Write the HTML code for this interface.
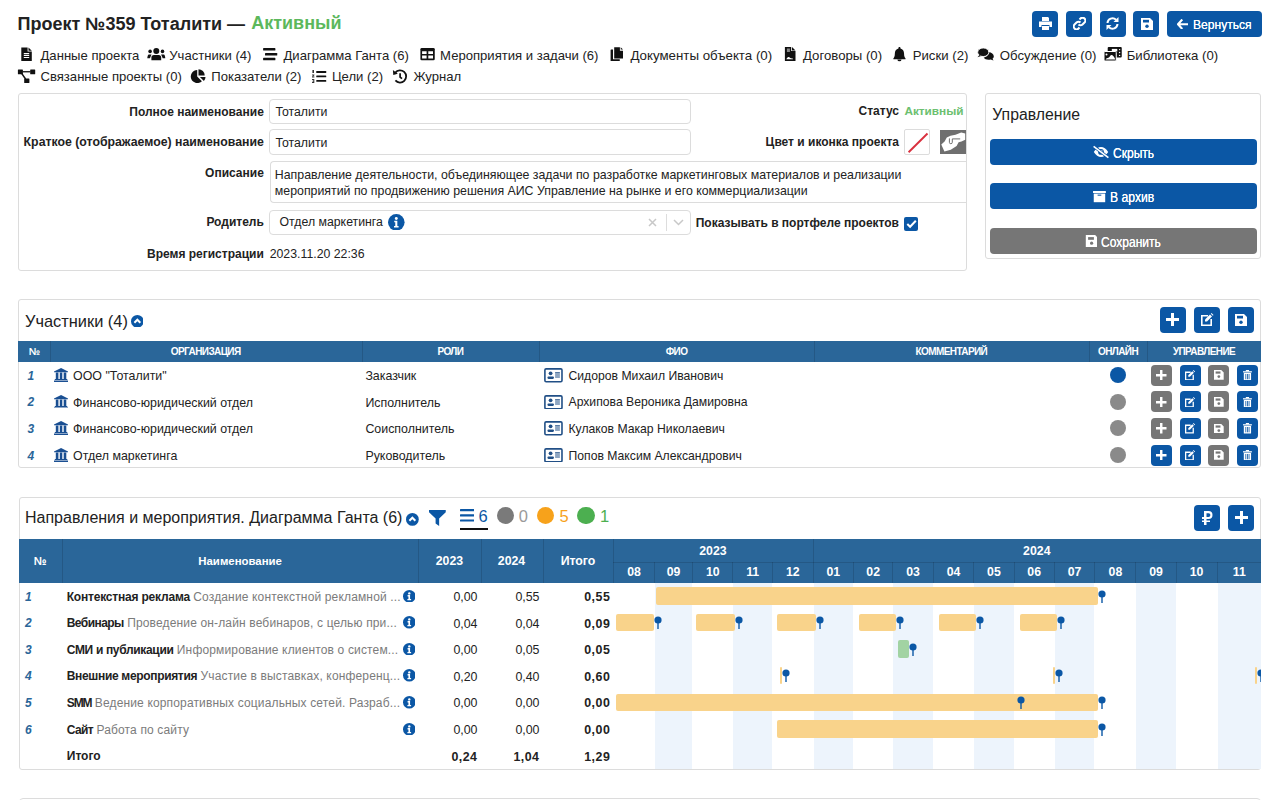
<!DOCTYPE html>
<html><head><meta charset="utf-8"><style>
html,body{margin:0;padding:0;background:#fff;width:1280px;height:800px;overflow:hidden;position:relative;font-family:"Liberation Sans",sans-serif;}
.t{position:absolute;white-space:nowrap;}
.r{position:absolute;display:block;}
</style></head><body>
<div class="t" style="top:12.66px;font-size:18px;line-height:22px;font-weight:bold;color:#222;left:17.60px;">Проект №359 Тоталити —</div>
<div class="t" style="top:12.46px;font-size:18px;line-height:22px;font-weight:bold;color:#5cb85c;left:251.20px;">Активный</div>
<div class="r" style="left:1032.20px;top:10.60px;width:26.00px;height:26.60px;background:#0b57a5;border-radius:4px;"></div>
<div class="r" style="left:1066.10px;top:10.60px;width:26.00px;height:26.60px;background:#0b57a5;border-radius:4px;"></div>
<div class="r" style="left:1099.80px;top:10.60px;width:26.00px;height:26.60px;background:#0b57a5;border-radius:4px;"></div>
<div class="r" style="left:1133.30px;top:10.60px;width:26.00px;height:26.60px;background:#0b57a5;border-radius:4px;"></div>
<div class="r" style="left:1167.30px;top:10.60px;width:94.80px;height:26.60px;background:#0b57a5;border-radius:4px;"></div>
<svg class="r" style="left:1038.50px;top:17.00px;width:13.00px;height:13.00px;color:#fff" viewBox="0 0 13 13" fill="currentColor"><path d="M3 0h6l1 1v3H3z"/><path d="M0 4.5h13V10h-2.5V8h-8v2H0z"/><path d="M3 9h7v4H3z"/></svg>
<svg class="r" style="left:1072.60px;top:17.40px;width:13.00px;height:13.00px;color:#fff" viewBox="0 0 13 13" fill="currentColor"><path d="M5.5 7.5a2.8 2.8 0 0 0 4 0l2-2a2.8 2.8 0 0 0-4-4l-1 1" fill="none" stroke="#fff" stroke-width="2"/><path d="M7.5 5.5a2.8 2.8 0 0 0-4 0l-2 2a2.8 2.8 0 0 0 4 4l1-1" fill="none" stroke="#fff" stroke-width="2"/></svg>
<svg class="r" style="left:1106.30px;top:17.20px;width:13.00px;height:13.00px;color:#fff" viewBox="0 0 13 13" fill="currentColor"><path d="M1.5 6A5 5 0 0 1 10 2.7" fill="none" stroke="#fff" stroke-width="2"/><path d="M12.5 0v5h-5z"/><path d="M11.5 7A5 5 0 0 1 3 10.3" fill="none" stroke="#fff" stroke-width="2"/><path d="M.5 13V8h5z"/></svg>
<svg class="r" style="left:1140.50px;top:17.50px;width:12.00px;height:12.00px;color:#fff" viewBox="0 0 12 12" fill="currentColor"><path d="M0 0h9l3 3v9H0z"/><path fill="#0b57a5" d="M2 1.8h6v2.7H2z"/><circle cx="6" cy="8.2" r="1.7" fill="#0b57a5"/></svg>
<svg class="r" style="left:1177.40px;top:18.50px;width:11.50px;height:10.50px;color:#fff" viewBox="0 0 12 11" fill="currentColor"><path d="M5.5 0.5L1 5.5l4.5 5M1.5 5.5H11.5" fill="none" stroke="#fff" stroke-width="2.2"/></svg>
<div class="t" style="top:17.09px;font-size:13px;line-height:16px;font-weight:normal;color:#fff;left:1193.00px;transform:scaleX(0.93);transform-origin:left center;text-shadow:0 0 0.4px #fff;">Вернуться</div>
<svg class="r" style="left:20.00px;top:46.00px;width:13.00px;height:16.00px;color:#111" viewBox="20 46 13.000 16.000" fill="currentColor"><path d="M21.3 47.4H27.6V51.6H31.8V61.1H21.3Z"/><path d="M28.5 47.4L31.8 50.7H28.5Z"/><path fill="#fff" d="M23.8 53.1h5.4v1.1h-5.4zM23.8 55h5.4v1.1h-5.4zM23.8 56.9h5.4v1.1h-5.4z"/></svg>
<svg class="r" style="left:146.00px;top:47.00px;width:20.00px;height:14.00px;color:#111" viewBox="146 47 20.000 14.000" fill="currentColor"><circle cx="156.3" cy="51.1" r="3"/><path d="M151.4 57.6a2.6 2.6 0 0 1 2.6-2.6h4.6a2.6 2.6 0 0 1 2.6 2.6v2.65h-9.8z"/><circle cx="150.1" cy="51.4" r="1.8"/><circle cx="162.5" cy="51.4" r="1.8"/><path d="M148.9 54.4h2.6l-1.6 3.8h-2.6c.1-1.8.6-3.8 1.6-3.8z"/><path d="M163.7 54.4h-2.6l1.6 3.8h2.6c-.1-1.8-.6-3.8-1.6-3.8z"/></svg>
<svg class="r" style="left:262.00px;top:47.00px;width:16.00px;height:14.00px;color:#111" viewBox="262 47 16.000 14.000" fill="currentColor"><rect x="263.1" y="48.1" width="12.3" height="2.5" rx=".6"/><rect x="265" y="53" width="12.25" height="2.6" rx=".6"/><rect x="263.1" y="57.8" width="12.3" height="2.5" rx=".6"/></svg>
<svg class="r" style="left:419.00px;top:47.00px;width:17.00px;height:14.00px;color:#111" viewBox="419 47 17.000 14.000" fill="currentColor"><rect x="420.4" y="48" width="14.35" height="12.25" rx="1.3"/><path fill="#fff" d="M422.1 51.3h4.5v2.8h-4.5zM428.3 51.3h4.7v2.8h-4.7zM422.1 55.6h4.5v2.9h-4.5zM428.3 55.6h4.7v2.9h-4.7z"/></svg>
<svg class="r" style="left:609.00px;top:46.00px;width:15.00px;height:16.00px;color:#111" viewBox="609 46 15.000 16.000" fill="currentColor"><path d="M614.2 47.2H619.9V50.7H623V58.5H614.2Z"/><path d="M620.7 47.2L623 49.6H620.7Z"/><path d="M610.6 49.9q0-.4.4-.4H613V59.3H619.75V61H610.6Z"/></svg>
<svg class="r" style="left:784.00px;top:46.00px;width:13.00px;height:16.00px;color:#111" viewBox="784 46 13.000 16.000" fill="currentColor"><path d="M784.9 46.9H791.2V51H795.5V61H784.9Z"/><path d="M792 46.9L795.5 50.4H792Z"/><path fill="#fff" d="M786.9 48.7h3v.9h-3zM786.9 50.5h3v.9h-3z"/><path fill="#fff" d="M786.4 58.9q1.2-2.3 2.4-1.9t1.5 1q1 .6 2.6.4v.9h-6.5z"/></svg>
<svg class="r" style="left:892.00px;top:46.00px;width:15.00px;height:16.00px;color:#111" viewBox="892 46 15.000 16.000" fill="currentColor"><path d="M899.45 46.9c.6 0 1 .4 1 1v.5c2.4.6 3.6 2.6 3.6 5 0 3.3.8 4 1.45 4.9v.9h-12.1v-.9c.65-.9 1.45-1.6 1.45-4.9 0-2.4 1.2-4.4 3.6-5v-.5c0-.6.4-1 1-1z"/><path d="M897.4 59.4h4.1a2.05 1.85 0 0 1-4.1 0z"/></svg>
<svg class="r" style="left:976.00px;top:46.00px;width:19.00px;height:16.00px;color:#111" viewBox="976 46 19.000 16.000" fill="currentColor"><path d="M988.6 52.1c2.9.5 5.2 2.1 5.2 4.1 0 1-.5 1.9-1.3 2.6l1 1.6-2.9-1c-.7.2-1.4.3-2.1.3-2.1 0-3.9-.8-4.8-2 3.1-.6 5.1-2.8 4.9-5.6z"/><ellipse cx="983.25" cy="52.25" rx="5.6" ry="4.3" stroke="#fff" stroke-width=".9"/><path d="M979.4 55l-1.9 2.2 3.6-1.1z"/></svg>
<svg class="r" style="left:1103.00px;top:46.00px;width:20.00px;height:16.00px;color:#111" viewBox="1103 46 20.000 16.000" fill="currentColor"><rect x="1107.7" y="47" width="14.05" height="10.5" rx="1"/><path fill="#fff" d="M1111.8 48.9h5.5v2.6h-5.5z"/><circle cx="1119.6" cy="49.6" r=".7" fill="#fff"/><circle cx="1119.6" cy="52.5" r=".7" fill="#fff"/><circle cx="1119.6" cy="55.4" r=".7" fill="#fff"/><rect x="1104" y="51.5" width="12.25" height="9.5" rx="1" stroke="#fff" stroke-width="1"/><circle cx="1106.5" cy="54.4" r="1" fill="#fff"/><path fill="#fff" d="M1105.6 59.6q.4-1.3 2-1.6t2.2-1.6q1-1.6 2-1.4t1.9 1.5q1.2 1.5 1.5 3.1z"/></svg>
<svg class="r" style="left:17.00px;top:68.00px;width:19.00px;height:16.00px;color:#111" viewBox="17 68 19.000 16.000" fill="currentColor"><rect x="17.9" y="69.5" width="5" height="4.7" rx=".5"/><rect x="30.2" y="69.5" width="5" height="4.7" rx=".5"/><rect x="24.2" y="78.4" width="5.2" height="4.7" rx=".5"/><rect x="22.5" y="71.1" width="8" height="1.3"/><path d="M21.6 73.4L25.6 79" stroke="currentColor" stroke-width="1.5"/></svg>
<svg class="r" style="left:190.00px;top:68.00px;width:17.00px;height:16.00px;color:#111" viewBox="190 68 17.000 16.000" fill="currentColor"><path d="M197.2 76.6V69.9A6.6 6.6 0 1 0 201.9 81.3Z"/><path d="M198.5 75.4V69.25A6.2 6.2 0 0 1 204.7 75.4Z"/><path d="M199.9 77H205.5A5.9 5.9 0 0 1 203.9 81.1Z"/></svg>
<svg class="r" style="left:311.00px;top:68.00px;width:17.00px;height:16.00px;color:#111" viewBox="311 68 17.000 16.000" fill="currentColor"><rect x="316.25" y="71.1" width="10" height="1.8" rx=".5"/><rect x="316.25" y="75.5" width="10" height="1.8" rx=".5"/><rect x="316.25" y="80" width="10" height="1.8" rx=".5"/><path opacity=".85" d="M312.4 70h1.6v3h-1.6zM312 74.5h2.4v.8l-1.2 1.3h1.2v.9H312v-.8l1.2-1.3H312zM312 79h2.3v4H312v-.9h1.3v-.6H312.4v-.8h.9v-.6H312z"/></svg>
<svg class="r" style="left:392.00px;top:68.00px;width:16.00px;height:16.00px;color:#111" viewBox="392 68 16.000 16.000" fill="currentColor"><path d="M395.3 72.6A6.1 6.1 0 1 1 395.4 80.4" fill="none" stroke="currentColor" stroke-width="1.8"/><path d="M392.9 70.1L397.8 73.8L393.3 75Z"/><path d="M400.1 73.3V77.1L402 78.7" fill="none" stroke="currentColor" stroke-width="1.7"/></svg>
<div class="t" style="top:47.56px;font-size:13.1px;line-height:16px;font-weight:normal;color:#222;left:40.50px;">Данные проекта</div>
<div class="t" style="top:47.56px;font-size:13.1px;line-height:16px;font-weight:normal;color:#222;left:169.25px;">Участники (4)</div>
<div class="t" style="top:47.56px;font-size:13.1px;line-height:16px;font-weight:normal;color:#222;left:283.50px;">Диаграмма Ганта (6)</div>
<div class="t" style="top:47.56px;font-size:13.1px;line-height:16px;font-weight:normal;color:#222;left:440.10px;">Мероприятия и задачи (6)</div>
<div class="t" style="top:46.99px;font-size:13.3px;line-height:17px;font-weight:normal;color:#222;left:630.40px;">Документы объекта (0)</div>
<div class="t" style="top:47.52px;font-size:13.2px;line-height:16px;font-weight:normal;color:#222;left:803.00px;">Договоры (0)</div>
<div class="t" style="top:47.52px;font-size:13.2px;line-height:16px;font-weight:normal;color:#222;left:912.70px;">Риски (2)</div>
<div class="t" style="top:47.52px;font-size:13.2px;line-height:16px;font-weight:normal;color:#222;left:999.80px;">Обсуждение (0)</div>
<div class="t" style="top:47.52px;font-size:13.2px;line-height:16px;font-weight:normal;color:#222;left:1126.70px;">Библиотека (0)</div>
<div class="t" style="top:69.36px;font-size:13.1px;line-height:16px;font-weight:normal;color:#222;left:40.50px;">Связанные проекты (0)</div>
<div class="t" style="top:69.36px;font-size:13.1px;line-height:16px;font-weight:normal;color:#222;left:211.25px;">Показатели (2)</div>
<div class="t" style="top:69.36px;font-size:13.1px;line-height:16px;font-weight:normal;color:#222;left:331.90px;">Цели (2)</div>
<div class="t" style="top:69.36px;font-size:13.1px;line-height:16px;font-weight:normal;color:#222;left:413.40px;">Журнал</div>
<div class="r" style="left:18.30px;top:92.90px;width:948.50px;height:178.10px;border:1px solid #dcdcdc;border-radius:3px;box-sizing:border-box;"></div>
<div class="r" style="left:269.00px;top:98.60px;width:422.30px;height:25.30px;border:1px solid #dcdcdc;border-radius:4px;box-sizing:border-box;background:#fff;"></div>
<div class="t" style="top:104.74px;font-size:12px;line-height:15px;font-weight:bold;color:#222;left:-536.20px;width:800px;text-align:right;">Полное наименование</div>
<div class="t" style="top:105.14px;font-size:12.3px;line-height:15px;font-weight:normal;color:#222;left:275.40px;">Тоталити</div>
<div class="r" style="left:269.00px;top:129.40px;width:422.30px;height:25.50px;border:1px solid #dcdcdc;border-radius:4px;box-sizing:border-box;background:#fff;"></div>
<div class="t" style="top:135.24px;font-size:12.3px;line-height:15px;font-weight:bold;color:#222;left:-536.20px;width:800px;text-align:right;">Краткое (отображаемое) наименование</div>
<div class="t" style="top:135.94px;font-size:12.3px;line-height:15px;font-weight:normal;color:#222;left:275.40px;">Тоталити</div>
<div class="r" style="left:269.50px;top:161.20px;width:697.30px;height:41.80px;border:1px solid #dcdcdc;border-right:none;border-radius:4px 0 0 4px;box-sizing:border-box;"></div>
<div class="t" style="top:166.34px;font-size:12px;line-height:15px;font-weight:bold;color:#222;left:-536.20px;width:800px;text-align:right;">Описание</div>
<div class="t" style="top:167.92px;font-size:12.35px;line-height:15px;font-weight:normal;color:#222;left:274.80px;">Направление деятельности, объединяющее задачи по разработке маркетинговых материалов и реализации</div>
<div class="t" style="top:183.62px;font-size:12.35px;line-height:15px;font-weight:normal;color:#222;left:274.80px;">мероприятий по продвижению решения АИС Управление на рынке и его коммерциализации</div>
<div class="r" style="left:269.00px;top:209.50px;width:422.30px;height:25.70px;border:1px solid #dcdcdc;border-radius:4px;box-sizing:border-box;background:#fff;"></div>
<div class="t" style="top:215.14px;font-size:12px;line-height:15px;font-weight:bold;color:#222;left:-536.20px;width:800px;text-align:right;">Родитель</div>
<div class="t" style="top:214.84px;font-size:12.3px;line-height:15px;font-weight:normal;color:#222;left:279.50px;">Отдел маркетинга</div>
<svg class="r" style="left:388.40px;top:213.90px;width:16.60px;height:16.60px;color:#0b57a5" viewBox="0 0 16 16" fill="currentColor"><circle cx="8" cy="8" r="8"/><circle cx="8" cy="4.3" r="1.4" fill="#fff"/><path fill="#fff" d="M6 6.5h3v5h1.2v1.5H5.8v-1.5H7V8H6z"/></svg>
<svg class="r" style="left:648.00px;top:217.50px;width:9.00px;height:9.00px;color:#ccc" viewBox="0 0 9 9" fill="currentColor"><path d="M1 1l7 7M8 1L1 8" stroke="#c8c8c8" stroke-width="1.5" fill="none"/></svg>
<div class="r" style="left:666.00px;top:214.00px;width:1.00px;height:17.00px;background:#ddd;"></div>
<svg class="r" style="left:673.00px;top:219.00px;width:11.00px;height:7.00px;color:#ccc" viewBox="0 0 11 7" fill="currentColor"><path d="M1 1l4.5 4.5L10 1" stroke="#c8c8c8" stroke-width="1.5" fill="none"/></svg>
<div class="t" style="top:246.64px;font-size:12px;line-height:15px;font-weight:bold;color:#222;left:-536.20px;width:800px;text-align:right;">Время регистрации</div>
<div class="t" style="top:246.84px;font-size:12.3px;line-height:15px;font-weight:normal;color:#222;left:269.70px;">2023.11.20 22:36</div>
<div class="t" style="top:104.34px;font-size:12px;line-height:15px;font-weight:bold;color:#222;left:99.00px;width:800px;text-align:right;">Статус</div>
<div class="t" style="top:104.41px;font-size:11.8px;line-height:15px;font-weight:bold;color:#6cc070;left:904.40px;">Активный</div>
<div class="t" style="top:135.34px;font-size:12px;line-height:15px;font-weight:bold;color:#222;left:99.00px;width:800px;text-align:right;">Цвет и иконка проекта</div>
<div class="r" style="left:904.40px;top:129.30px;width:26.00px;height:26.00px;border:1px solid #dcdcdc;border-radius:2px;box-sizing:border-box;background:#fff;"></div>
<svg class="r" style="left:904.00px;top:129.00px;width:27.00px;height:27.00px;color:#222" viewBox="904 129 27.000 27.000" fill="currentColor"><path d="M908.6 152.2L927.5 133.5" stroke="#d9303e" stroke-width="1.9"/></svg>
<div class="r" style="left:940.20px;top:129.60px;width:26.10px;height:24.60px;background:#6f6f6f;"></div>
<svg class="r" style="left:940.00px;top:129.00px;width:26.30px;height:26.00px;color:#fff" viewBox="940 129 26.300 26.000" fill="currentColor"><path fill="#fff" d="M941.3 144.6L944.6 141.4L946.8 137.6L950.5 135.8L955.5 134.8L961.2 132.4L965.2 133.6V139.8L961.5 141.6L958.6 142.3L956.6 145.9L950.8 149.8L944.4 151.4Z"/><path d="M949.4 138.4V142.4Q949.4 143.7 950.8 143.7Q952.3 143.7 952.3 142.3V138.9H960.2" stroke="#6f6f6f" stroke-width="1" fill="none"/></svg>
<div class="t" style="top:216.04px;font-size:12px;line-height:15px;font-weight:bold;color:#222;left:99.00px;width:800px;text-align:right;">Показывать в портфеле проектов</div>
<div class="r" style="left:904.30px;top:216.70px;width:14.00px;height:14.00px;background:#0b57a5;border-radius:2px;"></div>
<svg class="r" style="left:905.80px;top:218.50px;width:11.00px;height:10.00px;color:#fff" viewBox="0 0 11 10" fill="currentColor"><path d="M1.3 5l2.8 2.8L9.8 1.8" stroke="#fff" stroke-width="2" fill="none"/></svg>
<div class="r" style="left:985.30px;top:92.80px;width:276.10px;height:166.10px;border:1px solid #dcdcdc;border-radius:3px;box-sizing:border-box;"></div>
<div class="t" style="top:104.92px;font-size:15.8px;line-height:20px;font-weight:normal;color:#222;left:992.30px;">Управление</div>
<div class="r" style="left:990.10px;top:138.80px;width:266.90px;height:26.10px;background:#0b57a5;border-radius:4px;"></div>
<div class="r" style="left:990.10px;top:182.80px;width:266.90px;height:26.70px;background:#0b57a5;border-radius:4px;"></div>
<div class="r" style="left:990.10px;top:227.60px;width:266.90px;height:26.40px;background:#767676;border-radius:4px;"></div>
<svg class="r" style="left:1092.00px;top:144.00px;width:18.00px;height:16.00px;color:#fff" viewBox="1092 144 18.000 16.000" fill="currentColor"><path d="M1093.8 151.9Q1097 146.9 1101 146.9T1108.2 151.9Q1105 156.9 1101 156.9T1093.8 151.9Z"/><circle cx="1101" cy="151.9" r="2.9" fill="#0b57a5"/><path d="M1101 150.3a1.6 1.6 0 0 1 1.6 1.6" stroke="#fff" stroke-width="1" fill="none"/><path d="M1093.6 146.3L1108.4 157.6" stroke="#0b57a5" stroke-width="3"/><path d="M1093.6 146.3L1108.4 157.6" stroke="#fff" stroke-width="1.6"/></svg>
<div class="t" style="top:143.65px;font-size:14px;line-height:18px;font-weight:normal;color:#fff;left:1112.80px;transform:scaleX(0.86);transform-origin:left center;text-shadow:0 0 0.4px #fff;">Скрыть</div>
<svg class="r" style="left:1092.00px;top:189.00px;width:15.00px;height:15.00px;color:#fff" viewBox="1092 189 15.000 15.000" fill="currentColor"><rect x="1093" y="190.9" width="12.9" height="2.2" rx=".4"/><rect x="1093.75" y="193.6" width="11.45" height="8.6"/><path fill="#0b57a5" d="M1097.6 194.6h3.7v1.1h-3.7z"/></svg>
<div class="t" style="top:188.05px;font-size:14px;line-height:18px;font-weight:normal;color:#fff;left:1109.50px;transform:scaleX(0.87);transform-origin:left center;text-shadow:0 0 0.4px #fff;">В архив</div>
<svg class="r" style="left:1085.00px;top:234.00px;width:13.00px;height:14.00px;color:#fff" viewBox="1085 234 13.000 14.000" fill="currentColor"><path d="M1085.8 235.1H1095.2L1097 236.9V247H1085.8Z"/><path fill="#767676" d="M1088.1 237.1h5.8v2.7h-5.8z"/><circle cx="1091.6" cy="243.2" r="1.6" fill="#767676"/></svg>
<div class="t" style="top:232.75px;font-size:14px;line-height:18px;font-weight:normal;color:#fff;left:1101.20px;transform:scaleX(0.86);transform-origin:left center;text-shadow:0 0 0.4px #fff;">Сохранить</div>
<div class="r" style="left:18.30px;top:299.10px;width:1242.80px;height:169.30px;border:1px solid #dcdcdc;border-radius:3px;box-sizing:border-box;"></div>
<div class="t" style="top:310.91px;font-size:16.4px;line-height:20px;font-weight:normal;color:#222;left:25.00px;">Участники (4)</div>
<svg class="r" style="left:130.70px;top:314.60px;width:12.70px;height:12.70px;color:#0b57a5" viewBox="0 0 12 12" fill="currentColor"><circle cx="6" cy="6" r="6"/><path d="M3.2 7.3L6 4.5l2.8 2.8" stroke="#fff" stroke-width="1.9" fill="none"/></svg>
<div class="r" style="left:1159.90px;top:306.70px;width:26.00px;height:26.00px;background:#0b57a5;border-radius:4px;"></div>
<svg class="r" style="left:1166.40px;top:313.20px;width:13.00px;height:13.00px;color:#fff" viewBox="0 0 13 13" fill="currentColor"><path d="M5 0h3v13H5zM0 5h13v3H0z"/></svg>
<div class="r" style="left:1194.00px;top:306.70px;width:26.00px;height:26.00px;background:#0b57a5;border-radius:4px;"></div>
<svg class="r" style="left:1201.00px;top:313.20px;width:13.00px;height:13.00px;color:#fff" viewBox="0 0 13 13" fill="currentColor"><path d="M0 2h7v1.6H1.6v7.8h7.8V6H11v7H0z"/><path d="M4 6.5l5-5 2 2-5 5H4z"/><path d="M9.8.7l.7-.7 2 2-.7.7z"/></svg>
<div class="r" style="left:1227.80px;top:306.70px;width:26.00px;height:26.00px;background:#0b57a5;border-radius:4px;"></div>
<svg class="r" style="left:1234.80px;top:313.70px;width:12.00px;height:12.00px;color:#fff" viewBox="0 0 12 12" fill="currentColor"><path d="M0 0h9l3 3v9H0z"/><path fill="#0b57a5" d="M2 1.8h6v2.7H2z"/><circle cx="6" cy="8.2" r="1.7" fill="#0b57a5"/></svg>
<div class="r" style="left:18.30px;top:340.50px;width:1242.80px;height:21.00px;background:#2a6699;"></div>
<div class="r" style="left:49.80px;top:340.50px;width:1.00px;height:21.00px;background:rgba(0,0,0,0.13);"></div>
<div class="r" style="left:361.50px;top:340.50px;width:1.00px;height:21.00px;background:rgba(0,0,0,0.13);"></div>
<div class="r" style="left:539.20px;top:340.50px;width:1.00px;height:21.00px;background:rgba(0,0,0,0.13);"></div>
<div class="r" style="left:813.80px;top:340.50px;width:1.00px;height:21.00px;background:rgba(0,0,0,0.13);"></div>
<div class="r" style="left:1089.00px;top:340.50px;width:1.00px;height:21.00px;background:rgba(0,0,0,0.13);"></div>
<div class="r" style="left:1147.00px;top:340.50px;width:1.00px;height:21.00px;background:rgba(0,0,0,0.13);"></div>
<div class="t" style="top:345.73px;font-size:10px;line-height:12px;font-weight:bold;color:#fff;letter-spacing:-0.6px;left:-366.00px;width:800px;text-align:center;">№</div>
<div class="t" style="top:345.73px;font-size:10px;line-height:12px;font-weight:bold;color:#fff;letter-spacing:-0.6px;left:-194.30px;width:800px;text-align:center;">ОРГАНИЗАЦИЯ</div>
<div class="t" style="top:345.73px;font-size:10px;line-height:12px;font-weight:bold;color:#fff;letter-spacing:-0.6px;left:50.40px;width:800px;text-align:center;">РОЛИ</div>
<div class="t" style="top:345.73px;font-size:10px;line-height:12px;font-weight:bold;color:#fff;letter-spacing:-0.6px;left:276.50px;width:800px;text-align:center;">ФИО</div>
<div class="t" style="top:345.73px;font-size:10px;line-height:12px;font-weight:bold;color:#fff;letter-spacing:-0.6px;left:551.40px;width:800px;text-align:center;">КОММЕНТАРИЙ</div>
<div class="t" style="top:345.73px;font-size:10px;line-height:12px;font-weight:bold;color:#fff;letter-spacing:-0.6px;left:718.00px;width:800px;text-align:center;">ОНЛАЙН</div>
<div class="t" style="top:345.73px;font-size:10px;line-height:12px;font-weight:bold;color:#fff;letter-spacing:-0.6px;left:804.00px;width:800px;text-align:center;">УПРАВЛЕНИЕ</div>
<div class="t" style="top:368.94px;font-size:12px;line-height:15px;font-weight:bold;color:#2a6699;font-style:italic;left:27.40px;">1</div>
<svg class="r" style="left:54.20px;top:368.00px;width:14.10px;height:13.90px;color:#1a4f92" viewBox="0 0 14.1 13.9" fill="currentColor"><path d="M0 3.6L7.05 0L14.1 3.6V4.3H0Z"/><path d="M1.8 4.6h2.6v6.5H1.8zM5.8 4.6h2.5v6.5H5.8zM9.7 4.6h2.6v6.5H9.7z"/><path d="M.8 11h12.5v1H.8zM0 12.4h14.1v1.5H0z"/></svg>
<div class="t" style="top:368.30px;font-size:12.4px;line-height:16px;font-weight:normal;color:#222;left:73.10px;">ООО "Тоталити"</div>
<div class="t" style="top:368.30px;font-size:12.4px;line-height:16px;font-weight:normal;color:#222;left:365.40px;">Заказчик</div>
<svg class="r" style="left:544.10px;top:368.00px;width:18.90px;height:14.70px;color:#214f86" viewBox="0 0 18.9 14.7" fill="currentColor"><rect x="0.9" y="0.9" width="17.1" height="12.9" rx="1.2" fill="none" stroke="currentColor" stroke-width="1.6"/><circle cx="6.6" cy="5.3" r="1.9"/><rect x="3.4" y="8.6" width="6.6" height="2.3" rx="1.1"/><path d="M11.1 4.3h4.8v1.1h-4.8zM11.1 6.4h4.8v1.1h-4.8zM11.1 8.5h4.8v1.1h-4.8z"/></svg>
<div class="t" style="top:368.87px;font-size:12.2px;line-height:15px;font-weight:normal;color:#222;left:568.50px;">Сидоров Михаил Иванович</div>
<div class="r" style="left:1109.50px;top:367.10px;width:16.20px;height:16.20px;background:#0b57a5;border-radius:50%;"></div>
<div class="r" style="left:1151.00px;top:364.70px;width:21.00px;height:21.00px;background:#767676;border-radius:4px;"></div>
<svg class="r" style="left:1156.25px;top:369.95px;width:10.50px;height:10.50px;color:#fff" viewBox="0 0 13 13" fill="currentColor"><path d="M5 0h3v13H5zM0 5h13v3H0z"/></svg>
<div class="r" style="left:1179.70px;top:364.70px;width:21.00px;height:21.00px;background:#0b57a5;border-radius:4px;"></div>
<svg class="r" style="left:1185.35px;top:369.95px;width:10.50px;height:10.50px;color:#fff" viewBox="0 0 13 13" fill="currentColor"><path d="M0 2h7v1.6H1.6v7.8h7.8V6H11v7H0z"/><path d="M4 6.5l5-5 2 2-5 5H4z"/><path d="M9.8.7l.7-.7 2 2-.7.7z"/></svg>
<div class="r" style="left:1208.20px;top:364.70px;width:21.00px;height:21.00px;background:#767676;border-radius:4px;"></div>
<svg class="r" style="left:1213.85px;top:370.35px;width:9.69px;height:9.69px;color:#fff" viewBox="0 0 12 12" fill="currentColor"><path d="M0 0h9l3 3v9H0z"/><path fill="#767676" d="M2 1.8h6v2.7H2z"/><circle cx="6" cy="8.2" r="1.7" fill="#767676"/></svg>
<div class="r" style="left:1236.80px;top:364.70px;width:21.00px;height:21.00px;background:#0b57a5;border-radius:4px;"></div>
<svg class="r" style="left:1242.86px;top:369.95px;width:8.88px;height:10.50px;color:#fff" viewBox="0 0 11 13" fill="currentColor"><path d="M0 1.5h11V3H0z"/><path d="M3.5 0h4v1.5h-4z"/><path d="M1 3.5h9V13H1z"/><path fill="#0b57a5" d="M3 5h1v6.5H3zM5 5h1v6.5H5zM7 5h1v6.5H7z"/></svg>
<div class="t" style="top:395.49px;font-size:12px;line-height:15px;font-weight:bold;color:#2a6699;font-style:italic;left:27.40px;">2</div>
<svg class="r" style="left:54.20px;top:394.55px;width:14.10px;height:13.90px;color:#1a4f92" viewBox="0 0 14.1 13.9" fill="currentColor"><path d="M0 3.6L7.05 0L14.1 3.6V4.3H0Z"/><path d="M1.8 4.6h2.6v6.5H1.8zM5.8 4.6h2.5v6.5H5.8zM9.7 4.6h2.6v6.5H9.7z"/><path d="M.8 11h12.5v1H.8zM0 12.4h14.1v1.5H0z"/></svg>
<div class="t" style="top:394.85px;font-size:12.4px;line-height:16px;font-weight:normal;color:#222;left:73.10px;">Финансово-юридический отдел</div>
<div class="t" style="top:394.85px;font-size:12.4px;line-height:16px;font-weight:normal;color:#222;left:365.40px;">Исполнитель</div>
<svg class="r" style="left:544.10px;top:394.55px;width:18.90px;height:14.70px;color:#214f86" viewBox="0 0 18.9 14.7" fill="currentColor"><rect x="0.9" y="0.9" width="17.1" height="12.9" rx="1.2" fill="none" stroke="currentColor" stroke-width="1.6"/><circle cx="6.6" cy="5.3" r="1.9"/><rect x="3.4" y="8.6" width="6.6" height="2.3" rx="1.1"/><path d="M11.1 4.3h4.8v1.1h-4.8zM11.1 6.4h4.8v1.1h-4.8zM11.1 8.5h4.8v1.1h-4.8z"/></svg>
<div class="t" style="top:395.42px;font-size:12.2px;line-height:15px;font-weight:normal;color:#222;left:568.50px;">Архипова Вероника Дамировна</div>
<div class="r" style="left:1109.50px;top:393.70px;width:16.20px;height:16.20px;background:#8a8a8a;border-radius:50%;"></div>
<div class="r" style="left:1151.00px;top:391.30px;width:21.00px;height:21.00px;background:#767676;border-radius:4px;"></div>
<svg class="r" style="left:1156.25px;top:396.55px;width:10.50px;height:10.50px;color:#fff" viewBox="0 0 13 13" fill="currentColor"><path d="M5 0h3v13H5zM0 5h13v3H0z"/></svg>
<div class="r" style="left:1179.70px;top:391.30px;width:21.00px;height:21.00px;background:#0b57a5;border-radius:4px;"></div>
<svg class="r" style="left:1185.35px;top:396.55px;width:10.50px;height:10.50px;color:#fff" viewBox="0 0 13 13" fill="currentColor"><path d="M0 2h7v1.6H1.6v7.8h7.8V6H11v7H0z"/><path d="M4 6.5l5-5 2 2-5 5H4z"/><path d="M9.8.7l.7-.7 2 2-.7.7z"/></svg>
<div class="r" style="left:1208.20px;top:391.30px;width:21.00px;height:21.00px;background:#767676;border-radius:4px;"></div>
<svg class="r" style="left:1213.85px;top:396.95px;width:9.69px;height:9.69px;color:#fff" viewBox="0 0 12 12" fill="currentColor"><path d="M0 0h9l3 3v9H0z"/><path fill="#767676" d="M2 1.8h6v2.7H2z"/><circle cx="6" cy="8.2" r="1.7" fill="#767676"/></svg>
<div class="r" style="left:1236.80px;top:391.30px;width:21.00px;height:21.00px;background:#0b57a5;border-radius:4px;"></div>
<svg class="r" style="left:1242.86px;top:396.55px;width:8.88px;height:10.50px;color:#fff" viewBox="0 0 11 13" fill="currentColor"><path d="M0 1.5h11V3H0z"/><path d="M3.5 0h4v1.5h-4z"/><path d="M1 3.5h9V13H1z"/><path fill="#0b57a5" d="M3 5h1v6.5H3zM5 5h1v6.5H5zM7 5h1v6.5H7z"/></svg>
<div class="t" style="top:422.04px;font-size:12px;line-height:15px;font-weight:bold;color:#2a6699;font-style:italic;left:27.40px;">3</div>
<svg class="r" style="left:54.20px;top:421.10px;width:14.10px;height:13.90px;color:#1a4f92" viewBox="0 0 14.1 13.9" fill="currentColor"><path d="M0 3.6L7.05 0L14.1 3.6V4.3H0Z"/><path d="M1.8 4.6h2.6v6.5H1.8zM5.8 4.6h2.5v6.5H5.8zM9.7 4.6h2.6v6.5H9.7z"/><path d="M.8 11h12.5v1H.8zM0 12.4h14.1v1.5H0z"/></svg>
<div class="t" style="top:421.40px;font-size:12.4px;line-height:16px;font-weight:normal;color:#222;left:73.10px;">Финансово-юридический отдел</div>
<div class="t" style="top:421.40px;font-size:12.4px;line-height:16px;font-weight:normal;color:#222;left:365.40px;">Соисполнитель</div>
<svg class="r" style="left:544.10px;top:421.10px;width:18.90px;height:14.70px;color:#214f86" viewBox="0 0 18.9 14.7" fill="currentColor"><rect x="0.9" y="0.9" width="17.1" height="12.9" rx="1.2" fill="none" stroke="currentColor" stroke-width="1.6"/><circle cx="6.6" cy="5.3" r="1.9"/><rect x="3.4" y="8.6" width="6.6" height="2.3" rx="1.1"/><path d="M11.1 4.3h4.8v1.1h-4.8zM11.1 6.4h4.8v1.1h-4.8zM11.1 8.5h4.8v1.1h-4.8z"/></svg>
<div class="t" style="top:421.97px;font-size:12.2px;line-height:15px;font-weight:normal;color:#222;left:568.50px;">Кулаков Макар Николаевич</div>
<div class="r" style="left:1109.50px;top:420.30px;width:16.20px;height:16.20px;background:#8a8a8a;border-radius:50%;"></div>
<div class="r" style="left:1151.00px;top:417.90px;width:21.00px;height:21.00px;background:#767676;border-radius:4px;"></div>
<svg class="r" style="left:1156.25px;top:423.15px;width:10.50px;height:10.50px;color:#fff" viewBox="0 0 13 13" fill="currentColor"><path d="M5 0h3v13H5zM0 5h13v3H0z"/></svg>
<div class="r" style="left:1179.70px;top:417.90px;width:21.00px;height:21.00px;background:#0b57a5;border-radius:4px;"></div>
<svg class="r" style="left:1185.35px;top:423.15px;width:10.50px;height:10.50px;color:#fff" viewBox="0 0 13 13" fill="currentColor"><path d="M0 2h7v1.6H1.6v7.8h7.8V6H11v7H0z"/><path d="M4 6.5l5-5 2 2-5 5H4z"/><path d="M9.8.7l.7-.7 2 2-.7.7z"/></svg>
<div class="r" style="left:1208.20px;top:417.90px;width:21.00px;height:21.00px;background:#767676;border-radius:4px;"></div>
<svg class="r" style="left:1213.85px;top:423.55px;width:9.69px;height:9.69px;color:#fff" viewBox="0 0 12 12" fill="currentColor"><path d="M0 0h9l3 3v9H0z"/><path fill="#767676" d="M2 1.8h6v2.7H2z"/><circle cx="6" cy="8.2" r="1.7" fill="#767676"/></svg>
<div class="r" style="left:1236.80px;top:417.90px;width:21.00px;height:21.00px;background:#0b57a5;border-radius:4px;"></div>
<svg class="r" style="left:1242.86px;top:423.15px;width:8.88px;height:10.50px;color:#fff" viewBox="0 0 11 13" fill="currentColor"><path d="M0 1.5h11V3H0z"/><path d="M3.5 0h4v1.5h-4z"/><path d="M1 3.5h9V13H1z"/><path fill="#0b57a5" d="M3 5h1v6.5H3zM5 5h1v6.5H5zM7 5h1v6.5H7z"/></svg>
<div class="t" style="top:448.59px;font-size:12px;line-height:15px;font-weight:bold;color:#2a6699;font-style:italic;left:27.40px;">4</div>
<svg class="r" style="left:54.20px;top:447.65px;width:14.10px;height:13.90px;color:#1a4f92" viewBox="0 0 14.1 13.9" fill="currentColor"><path d="M0 3.6L7.05 0L14.1 3.6V4.3H0Z"/><path d="M1.8 4.6h2.6v6.5H1.8zM5.8 4.6h2.5v6.5H5.8zM9.7 4.6h2.6v6.5H9.7z"/><path d="M.8 11h12.5v1H.8zM0 12.4h14.1v1.5H0z"/></svg>
<div class="t" style="top:447.95px;font-size:12.4px;line-height:16px;font-weight:normal;color:#222;left:73.10px;">Отдел маркетинга</div>
<div class="t" style="top:447.95px;font-size:12.4px;line-height:16px;font-weight:normal;color:#222;left:365.40px;">Руководитель</div>
<svg class="r" style="left:544.10px;top:447.65px;width:18.90px;height:14.70px;color:#214f86" viewBox="0 0 18.9 14.7" fill="currentColor"><rect x="0.9" y="0.9" width="17.1" height="12.9" rx="1.2" fill="none" stroke="currentColor" stroke-width="1.6"/><circle cx="6.6" cy="5.3" r="1.9"/><rect x="3.4" y="8.6" width="6.6" height="2.3" rx="1.1"/><path d="M11.1 4.3h4.8v1.1h-4.8zM11.1 6.4h4.8v1.1h-4.8zM11.1 8.5h4.8v1.1h-4.8z"/></svg>
<div class="t" style="top:448.52px;font-size:12.2px;line-height:15px;font-weight:normal;color:#222;left:568.50px;">Попов Максим Александрович</div>
<div class="r" style="left:1109.50px;top:446.90px;width:16.20px;height:16.20px;background:#8a8a8a;border-radius:50%;"></div>
<div class="r" style="left:1151.00px;top:444.50px;width:21.00px;height:21.00px;background:#0b57a5;border-radius:4px;"></div>
<svg class="r" style="left:1156.25px;top:449.75px;width:10.50px;height:10.50px;color:#fff" viewBox="0 0 13 13" fill="currentColor"><path d="M5 0h3v13H5zM0 5h13v3H0z"/></svg>
<div class="r" style="left:1179.70px;top:444.50px;width:21.00px;height:21.00px;background:#0b57a5;border-radius:4px;"></div>
<svg class="r" style="left:1185.35px;top:449.75px;width:10.50px;height:10.50px;color:#fff" viewBox="0 0 13 13" fill="currentColor"><path d="M0 2h7v1.6H1.6v7.8h7.8V6H11v7H0z"/><path d="M4 6.5l5-5 2 2-5 5H4z"/><path d="M9.8.7l.7-.7 2 2-.7.7z"/></svg>
<div class="r" style="left:1208.20px;top:444.50px;width:21.00px;height:21.00px;background:#767676;border-radius:4px;"></div>
<svg class="r" style="left:1213.85px;top:450.15px;width:9.69px;height:9.69px;color:#fff" viewBox="0 0 12 12" fill="currentColor"><path d="M0 0h9l3 3v9H0z"/><path fill="#767676" d="M2 1.8h6v2.7H2z"/><circle cx="6" cy="8.2" r="1.7" fill="#767676"/></svg>
<div class="r" style="left:1236.80px;top:444.50px;width:21.00px;height:21.00px;background:#0b57a5;border-radius:4px;"></div>
<svg class="r" style="left:1242.86px;top:449.75px;width:8.88px;height:10.50px;color:#fff" viewBox="0 0 11 13" fill="currentColor"><path d="M0 1.5h11V3H0z"/><path d="M3.5 0h4v1.5h-4z"/><path d="M1 3.5h9V13H1z"/><path fill="#0b57a5" d="M3 5h1v6.5H3zM5 5h1v6.5H5zM7 5h1v6.5H7z"/></svg>
<div class="r" style="left:18.50px;top:496.75px;width:1242.60px;height:273.55px;border:1px solid #dcdcdc;border-radius:3px;box-sizing:border-box;"></div>
<div class="t" style="top:508.35px;font-size:16px;line-height:20px;font-weight:normal;color:#222;left:25.00px;">Направления и мероприятия. Диаграмма Ганта (6)</div>
<svg class="r" style="left:406.00px;top:513.00px;width:12.75px;height:12.75px;color:#0b57a5" viewBox="0 0 12 12" fill="currentColor"><circle cx="6" cy="6" r="6"/><path d="M3.2 7.3L6 4.5l2.8 2.8" stroke="#fff" stroke-width="1.9" fill="none"/></svg>
<svg class="r" style="left:428.75px;top:509.50px;width:16.75px;height:16.00px;color:#0b57a5" viewBox="0 0 17 16" fill="currentColor"><path d="M0 0h17v2.2L10.3 8.5V16L6.7 13.5V8.5L0 2.2z"/></svg>
<svg class="r" style="left:459.80px;top:509.40px;width:14.40px;height:12.60px;color:#0b57a5" viewBox="0 0 14.4 12.6" fill="currentColor"><rect x="0" y="0" width="14.4" height="2.2" rx=".5"/><rect x="0" y="5.2" width="14.4" height="2.2" rx=".5"/><rect x="0" y="10.4" width="14.4" height="2.2" rx=".5"/></svg>
<div class="t" style="top:506.28px;font-size:16.5px;line-height:21px;font-weight:normal;color:#0b57a5;left:478.50px;">6</div>
<div class="r" style="left:459.50px;top:528.00px;width:28.50px;height:1.60px;background:#111;"></div>
<div class="r" style="left:497.00px;top:506.90px;width:17.25px;height:17.25px;background:#7a7a7a;border-radius:50%;"></div>
<div class="t" style="top:506.28px;font-size:16.5px;line-height:21px;font-weight:normal;color:#9a9a9a;left:518.75px;">0</div>
<div class="r" style="left:536.75px;top:506.90px;width:17.50px;height:17.50px;background:#f7a21b;border-radius:50%;"></div>
<div class="t" style="top:506.28px;font-size:16.5px;line-height:21px;font-weight:normal;color:#f7a21b;left:559.50px;">5</div>
<div class="r" style="left:577.00px;top:506.90px;width:17.50px;height:17.50px;background:#4caf50;border-radius:50%;"></div>
<div class="t" style="top:506.28px;font-size:16.5px;line-height:21px;font-weight:normal;color:#4caf50;left:600.00px;">1</div>
<div class="r" style="left:1194.20px;top:504.60px;width:26.00px;height:26.00px;background:#0b57a5;border-radius:4px;"></div>
<svg class="r" style="left:1201.70px;top:510.60px;width:11.00px;height:14.00px;color:#fff" viewBox="0 0 11 14" fill="currentColor"><path d="M2 0h4.5a4 4 0 0 1 0 8H4.5v1.5H8V11H4.5v3H2v-3H0V9.5h2V8H0V6h2zM4.5 2.2V6h2a1.9 1.9 0 0 0 0-3.8z"/></svg>
<div class="r" style="left:1228.00px;top:504.60px;width:26.00px;height:26.00px;background:#0b57a5;border-radius:4px;"></div>
<svg class="r" style="left:1234.50px;top:511.10px;width:13.00px;height:13.00px;color:#fff" viewBox="0 0 13 13" fill="currentColor"><path d="M5 0h3v13H5zM0 5h13v3H0z"/></svg>
<div class="r" style="left:18.50px;top:538.75px;width:1242.60px;height:43.75px;background:#2a6699;"></div>
<div class="r" style="left:62.00px;top:538.75px;width:1.00px;height:43.75px;background:rgba(0,0,0,0.13);"></div>
<div class="r" style="left:418.25px;top:538.75px;width:1.00px;height:43.75px;background:rgba(0,0,0,0.13);"></div>
<div class="r" style="left:480.50px;top:538.75px;width:1.00px;height:43.75px;background:rgba(0,0,0,0.13);"></div>
<div class="r" style="left:542.50px;top:538.75px;width:1.00px;height:43.75px;background:rgba(0,0,0,0.13);"></div>
<div class="r" style="left:613.30px;top:538.75px;width:1.00px;height:43.75px;background:rgba(0,0,0,0.13);"></div>
<div class="r" style="left:613.30px;top:561.50px;width:647.80px;height:1.00px;background:rgba(0,0,0,0.13);"></div>
<div class="r" style="left:812.50px;top:538.75px;width:1.00px;height:22.75px;background:rgba(0,0,0,0.13);"></div>
<div class="r" style="left:653.70px;top:561.50px;width:1.00px;height:21.00px;background:rgba(0,0,0,0.13);"></div>
<div class="r" style="left:692.40px;top:561.50px;width:1.00px;height:21.00px;background:rgba(0,0,0,0.13);"></div>
<div class="r" style="left:732.30px;top:561.50px;width:1.00px;height:21.00px;background:rgba(0,0,0,0.13);"></div>
<div class="r" style="left:772.10px;top:561.50px;width:1.00px;height:21.00px;background:rgba(0,0,0,0.13);"></div>
<div class="r" style="left:812.50px;top:561.50px;width:1.00px;height:21.00px;background:rgba(0,0,0,0.13);"></div>
<div class="r" style="left:853.10px;top:561.50px;width:1.00px;height:21.00px;background:rgba(0,0,0,0.13);"></div>
<div class="r" style="left:892.20px;top:561.50px;width:1.00px;height:21.00px;background:rgba(0,0,0,0.13);"></div>
<div class="r" style="left:932.80px;top:561.50px;width:1.00px;height:21.00px;background:rgba(0,0,0,0.13);"></div>
<div class="r" style="left:973.30px;top:561.50px;width:1.00px;height:21.00px;background:rgba(0,0,0,0.13);"></div>
<div class="r" style="left:1013.60px;top:561.50px;width:1.00px;height:21.00px;background:rgba(0,0,0,0.13);"></div>
<div class="r" style="left:1053.80px;top:561.50px;width:1.00px;height:21.00px;background:rgba(0,0,0,0.13);"></div>
<div class="r" style="left:1094.40px;top:561.50px;width:1.00px;height:21.00px;background:rgba(0,0,0,0.13);"></div>
<div class="r" style="left:1135.40px;top:561.50px;width:1.00px;height:21.00px;background:rgba(0,0,0,0.13);"></div>
<div class="r" style="left:1175.60px;top:561.50px;width:1.00px;height:21.00px;background:rgba(0,0,0,0.13);"></div>
<div class="r" style="left:1216.60px;top:561.50px;width:1.00px;height:21.00px;background:rgba(0,0,0,0.13);"></div>
<div class="t" style="top:554.31px;font-size:11.5px;line-height:14px;font-weight:bold;color:#fff;left:-359.80px;width:800px;text-align:center;">№</div>
<div class="t" style="top:554.35px;font-size:11.4px;line-height:14px;font-weight:bold;color:#fff;left:-159.90px;width:800px;text-align:center;">Наименование</div>
<div class="t" style="top:553.84px;font-size:12.3px;line-height:15px;font-weight:bold;color:#fff;left:49.40px;width:800px;text-align:center;">2023</div>
<div class="t" style="top:553.84px;font-size:12.3px;line-height:15px;font-weight:bold;color:#fff;left:111.50px;width:800px;text-align:center;">2024</div>
<div class="t" style="top:553.84px;font-size:12.3px;line-height:15px;font-weight:bold;color:#fff;left:178.00px;width:800px;text-align:center;">Итого</div>
<div class="t" style="top:543.74px;font-size:12.3px;line-height:15px;font-weight:bold;color:#fff;left:312.90px;width:800px;text-align:center;">2023</div>
<div class="t" style="top:543.74px;font-size:12.3px;line-height:15px;font-weight:bold;color:#fff;left:636.80px;width:800px;text-align:center;">2024</div>
<div class="t" style="top:565.34px;font-size:12.3px;line-height:15px;font-weight:bold;color:#fff;left:234.00px;width:800px;text-align:center;">08</div>
<div class="t" style="top:565.34px;font-size:12.3px;line-height:15px;font-weight:bold;color:#fff;left:273.55px;width:800px;text-align:center;">09</div>
<div class="t" style="top:565.34px;font-size:12.3px;line-height:15px;font-weight:bold;color:#fff;left:312.85px;width:800px;text-align:center;">10</div>
<div class="t" style="top:565.34px;font-size:12.3px;line-height:15px;font-weight:bold;color:#fff;left:352.70px;width:800px;text-align:center;">11</div>
<div class="t" style="top:565.34px;font-size:12.3px;line-height:15px;font-weight:bold;color:#fff;left:392.80px;width:800px;text-align:center;">12</div>
<div class="t" style="top:565.34px;font-size:12.3px;line-height:15px;font-weight:bold;color:#fff;left:433.30px;width:800px;text-align:center;">01</div>
<div class="t" style="top:565.34px;font-size:12.3px;line-height:15px;font-weight:bold;color:#fff;left:473.15px;width:800px;text-align:center;">02</div>
<div class="t" style="top:565.34px;font-size:12.3px;line-height:15px;font-weight:bold;color:#fff;left:513.00px;width:800px;text-align:center;">03</div>
<div class="t" style="top:565.34px;font-size:12.3px;line-height:15px;font-weight:bold;color:#fff;left:553.55px;width:800px;text-align:center;">04</div>
<div class="t" style="top:565.34px;font-size:12.3px;line-height:15px;font-weight:bold;color:#fff;left:593.95px;width:800px;text-align:center;">05</div>
<div class="t" style="top:565.34px;font-size:12.3px;line-height:15px;font-weight:bold;color:#fff;left:634.20px;width:800px;text-align:center;">06</div>
<div class="t" style="top:565.34px;font-size:12.3px;line-height:15px;font-weight:bold;color:#fff;left:674.60px;width:800px;text-align:center;">07</div>
<div class="t" style="top:565.34px;font-size:12.3px;line-height:15px;font-weight:bold;color:#fff;left:715.40px;width:800px;text-align:center;">08</div>
<div class="t" style="top:565.34px;font-size:12.3px;line-height:15px;font-weight:bold;color:#fff;left:756.00px;width:800px;text-align:center;">09</div>
<div class="t" style="top:565.34px;font-size:12.3px;line-height:15px;font-weight:bold;color:#fff;left:796.60px;width:800px;text-align:center;">10</div>
<div class="t" style="top:565.34px;font-size:12.3px;line-height:15px;font-weight:bold;color:#fff;left:839.35px;width:800px;text-align:center;">11</div>
<div class="r" style="left:654.70px;top:582.50px;width:37.70px;height:186.80px;background:#edf4fc;"></div>
<div class="r" style="left:733.30px;top:582.50px;width:38.80px;height:186.80px;background:#edf4fc;"></div>
<div class="r" style="left:813.50px;top:582.50px;width:39.60px;height:186.80px;background:#edf4fc;"></div>
<div class="r" style="left:893.20px;top:582.50px;width:39.60px;height:186.80px;background:#edf4fc;"></div>
<div class="r" style="left:974.30px;top:582.50px;width:39.30px;height:186.80px;background:#edf4fc;"></div>
<div class="r" style="left:1054.80px;top:582.50px;width:39.60px;height:186.80px;background:#edf4fc;"></div>
<div class="r" style="left:1136.40px;top:582.50px;width:39.20px;height:186.80px;background:#edf4fc;"></div>
<div class="r" style="left:1217.60px;top:582.50px;width:43.50px;height:186.80px;background:#edf4fc;"></div>
<div class="t" style="top:589.54px;font-size:12px;line-height:15px;font-weight:bold;color:#2a6699;font-style:italic;left:25.00px;">1</div>
<div class="t" style="top:589.54px;font-size:12px;line-height:15px;font-weight:normal;color:#222;left:66.75px;"><b style="color:#222;letter-spacing:-0.2px">Контекстная реклама</b> <span style="color:#7b7b7b;letter-spacing:0.15px">Создание контекстной рекламной ...</span></div>
<svg class="r" style="left:402.80px;top:589.60px;width:12.60px;height:12.60px;color:#0b57a5" viewBox="0 0 16 16" fill="currentColor"><circle cx="8" cy="8" r="8"/><circle cx="8" cy="4.3" r="1.5" fill="#fff"/><path fill="#fff" d="M5.8 6.5h3.2v5h1.3v1.6H5.6v-1.6h1.3V8.1H5.8z"/></svg>
<div class="t" style="top:588.90px;font-size:12.4px;line-height:16px;font-weight:normal;color:#222;left:-322.50px;width:800px;text-align:right;">0,00</div>
<div class="t" style="top:588.90px;font-size:12.4px;line-height:16px;font-weight:normal;color:#222;left:-260.50px;width:800px;text-align:right;">0,55</div>
<div class="t" style="top:588.90px;font-size:12.4px;line-height:16px;font-weight:bold;color:#222;letter-spacing:0.5px;left:-189.70px;width:800px;text-align:right;margin-right:-0.5px">0,55</div>
<div class="t" style="top:616.16px;font-size:12px;line-height:15px;font-weight:bold;color:#2a6699;font-style:italic;left:25.00px;">2</div>
<div class="t" style="top:616.16px;font-size:12px;line-height:15px;font-weight:normal;color:#222;left:66.75px;"><b style="color:#222;letter-spacing:-0.55px">Вебинары</b> <span style="color:#7b7b7b;letter-spacing:0.15px">Проведение он-лайн вебинаров, с целью при...</span></div>
<svg class="r" style="left:402.80px;top:616.22px;width:12.60px;height:12.60px;color:#0b57a5" viewBox="0 0 16 16" fill="currentColor"><circle cx="8" cy="8" r="8"/><circle cx="8" cy="4.3" r="1.5" fill="#fff"/><path fill="#fff" d="M5.8 6.5h3.2v5h1.3v1.6H5.6v-1.6h1.3V8.1H5.8z"/></svg>
<div class="t" style="top:615.52px;font-size:12.4px;line-height:16px;font-weight:normal;color:#222;left:-322.50px;width:800px;text-align:right;">0,04</div>
<div class="t" style="top:615.52px;font-size:12.4px;line-height:16px;font-weight:normal;color:#222;left:-260.50px;width:800px;text-align:right;">0,04</div>
<div class="t" style="top:615.52px;font-size:12.4px;line-height:16px;font-weight:bold;color:#222;letter-spacing:0.5px;left:-189.70px;width:800px;text-align:right;margin-right:-0.5px">0,09</div>
<div class="t" style="top:642.78px;font-size:12px;line-height:15px;font-weight:bold;color:#2a6699;font-style:italic;left:25.00px;">3</div>
<div class="t" style="top:642.78px;font-size:12px;line-height:15px;font-weight:normal;color:#222;left:66.75px;"><b style="color:#222;letter-spacing:-0.33px">СМИ и публикации</b> <span style="color:#7b7b7b;letter-spacing:0.15px">Информирование клиентов о систем...</span></div>
<svg class="r" style="left:402.80px;top:642.84px;width:12.60px;height:12.60px;color:#0b57a5" viewBox="0 0 16 16" fill="currentColor"><circle cx="8" cy="8" r="8"/><circle cx="8" cy="4.3" r="1.5" fill="#fff"/><path fill="#fff" d="M5.8 6.5h3.2v5h1.3v1.6H5.6v-1.6h1.3V8.1H5.8z"/></svg>
<div class="t" style="top:642.14px;font-size:12.4px;line-height:16px;font-weight:normal;color:#222;left:-322.50px;width:800px;text-align:right;">0,00</div>
<div class="t" style="top:642.14px;font-size:12.4px;line-height:16px;font-weight:normal;color:#222;left:-260.50px;width:800px;text-align:right;">0,05</div>
<div class="t" style="top:642.14px;font-size:12.4px;line-height:16px;font-weight:bold;color:#222;letter-spacing:0.5px;left:-189.70px;width:800px;text-align:right;margin-right:-0.5px">0,05</div>
<div class="t" style="top:669.40px;font-size:12px;line-height:15px;font-weight:bold;color:#2a6699;font-style:italic;left:25.00px;">4</div>
<div class="t" style="top:669.40px;font-size:12px;line-height:15px;font-weight:normal;color:#222;left:66.75px;"><b style="color:#222;letter-spacing:-0.33px">Внешние мероприятия</b> <span style="color:#7b7b7b;letter-spacing:0.15px">Участие в выставках, конференц...</span></div>
<svg class="r" style="left:402.80px;top:669.46px;width:12.60px;height:12.60px;color:#0b57a5" viewBox="0 0 16 16" fill="currentColor"><circle cx="8" cy="8" r="8"/><circle cx="8" cy="4.3" r="1.5" fill="#fff"/><path fill="#fff" d="M5.8 6.5h3.2v5h1.3v1.6H5.6v-1.6h1.3V8.1H5.8z"/></svg>
<div class="t" style="top:668.76px;font-size:12.4px;line-height:16px;font-weight:normal;color:#222;left:-322.50px;width:800px;text-align:right;">0,20</div>
<div class="t" style="top:668.76px;font-size:12.4px;line-height:16px;font-weight:normal;color:#222;left:-260.50px;width:800px;text-align:right;">0,40</div>
<div class="t" style="top:668.76px;font-size:12.4px;line-height:16px;font-weight:bold;color:#222;letter-spacing:0.5px;left:-189.70px;width:800px;text-align:right;margin-right:-0.5px">0,60</div>
<div class="t" style="top:696.02px;font-size:12px;line-height:15px;font-weight:bold;color:#2a6699;font-style:italic;left:25.00px;">5</div>
<div class="t" style="top:696.02px;font-size:12px;line-height:15px;font-weight:normal;color:#222;left:66.75px;"><b style="color:#222;letter-spacing:-1.1px">SMM</b> <span style="color:#7b7b7b;letter-spacing:0.15px">Ведение корпоративных социальных сетей. Разраб...</span></div>
<svg class="r" style="left:402.80px;top:696.08px;width:12.60px;height:12.60px;color:#0b57a5" viewBox="0 0 16 16" fill="currentColor"><circle cx="8" cy="8" r="8"/><circle cx="8" cy="4.3" r="1.5" fill="#fff"/><path fill="#fff" d="M5.8 6.5h3.2v5h1.3v1.6H5.6v-1.6h1.3V8.1H5.8z"/></svg>
<div class="t" style="top:695.38px;font-size:12.4px;line-height:16px;font-weight:normal;color:#222;left:-322.50px;width:800px;text-align:right;">0,00</div>
<div class="t" style="top:695.38px;font-size:12.4px;line-height:16px;font-weight:normal;color:#222;left:-260.50px;width:800px;text-align:right;">0,00</div>
<div class="t" style="top:695.38px;font-size:12.4px;line-height:16px;font-weight:bold;color:#222;letter-spacing:0.5px;left:-189.70px;width:800px;text-align:right;margin-right:-0.5px">0,00</div>
<div class="t" style="top:722.64px;font-size:12px;line-height:15px;font-weight:bold;color:#2a6699;font-style:italic;left:25.00px;">6</div>
<div class="t" style="top:722.64px;font-size:12px;line-height:15px;font-weight:normal;color:#222;left:66.75px;"><b style="color:#222;letter-spacing:-0.6px">Сайт</b> <span style="color:#7b7b7b;letter-spacing:0.15px">Работа по сайту</span></div>
<svg class="r" style="left:402.80px;top:722.70px;width:12.60px;height:12.60px;color:#0b57a5" viewBox="0 0 16 16" fill="currentColor"><circle cx="8" cy="8" r="8"/><circle cx="8" cy="4.3" r="1.5" fill="#fff"/><path fill="#fff" d="M5.8 6.5h3.2v5h1.3v1.6H5.6v-1.6h1.3V8.1H5.8z"/></svg>
<div class="t" style="top:722.00px;font-size:12.4px;line-height:16px;font-weight:normal;color:#222;left:-322.50px;width:800px;text-align:right;">0,00</div>
<div class="t" style="top:722.00px;font-size:12.4px;line-height:16px;font-weight:normal;color:#222;left:-260.50px;width:800px;text-align:right;">0,00</div>
<div class="t" style="top:722.00px;font-size:12.4px;line-height:16px;font-weight:bold;color:#222;letter-spacing:0.5px;left:-189.70px;width:800px;text-align:right;margin-right:-0.5px">0,00</div>
<div class="t" style="top:749.26px;font-size:12px;line-height:15px;font-weight:bold;color:#222;left:66.75px;">Итого</div>
<div class="t" style="top:748.62px;font-size:12.4px;line-height:16px;font-weight:bold;color:#222;letter-spacing:0.5px;left:-322.50px;width:800px;text-align:right;margin-right:-0.5px">0,24</div>
<div class="t" style="top:748.62px;font-size:12.4px;line-height:16px;font-weight:bold;color:#222;letter-spacing:0.5px;left:-260.50px;width:800px;text-align:right;margin-right:-0.5px">1,04</div>
<div class="t" style="top:748.62px;font-size:12.4px;line-height:16px;font-weight:bold;color:#222;letter-spacing:0.5px;left:-189.70px;width:800px;text-align:right;margin-right:-0.5px">1,29</div>
<div class="r" style="left:655.50px;top:587.06px;width:442.50px;height:17.50px;background:#f9d38b;border-radius:2px;"></div>
<svg class="r" style="left:1097.90px;top:589.51px;width:8.00px;height:13.00px;color:#0b57a5" viewBox="0 0 8 13" fill="currentColor"><circle cx="4" cy="4" r="3.6"/><path d="M3.3 5h1.4v8H3.3z"/></svg>
<div class="r" style="left:615.50px;top:613.68px;width:38.25px;height:17.50px;background:#f9d38b;border-radius:2px;"></div>
<svg class="r" style="left:654.25px;top:616.13px;width:8.00px;height:13.00px;color:#0b57a5" viewBox="0 0 8 13" fill="currentColor"><circle cx="4" cy="4" r="3.6"/><path d="M3.3 5h1.4v8H3.3z"/></svg>
<div class="r" style="left:696.25px;top:613.68px;width:38.25px;height:17.50px;background:#f9d38b;border-radius:2px;"></div>
<svg class="r" style="left:735.00px;top:616.13px;width:8.00px;height:13.00px;color:#0b57a5" viewBox="0 0 8 13" fill="currentColor"><circle cx="4" cy="4" r="3.6"/><path d="M3.3 5h1.4v8H3.3z"/></svg>
<div class="r" style="left:777.00px;top:613.68px;width:38.50px;height:17.50px;background:#f9d38b;border-radius:2px;"></div>
<svg class="r" style="left:816.00px;top:616.13px;width:8.00px;height:13.00px;color:#0b57a5" viewBox="0 0 8 13" fill="currentColor"><circle cx="4" cy="4" r="3.6"/><path d="M3.3 5h1.4v8H3.3z"/></svg>
<div class="r" style="left:858.75px;top:613.68px;width:37.00px;height:17.50px;background:#f9d38b;border-radius:2px;"></div>
<svg class="r" style="left:896.00px;top:616.13px;width:8.00px;height:13.00px;color:#0b57a5" viewBox="0 0 8 13" fill="currentColor"><circle cx="4" cy="4" r="3.6"/><path d="M3.3 5h1.4v8H3.3z"/></svg>
<div class="r" style="left:938.80px;top:613.68px;width:37.40px;height:17.50px;background:#f9d38b;border-radius:2px;"></div>
<svg class="r" style="left:976.40px;top:616.13px;width:8.00px;height:13.00px;color:#0b57a5" viewBox="0 0 8 13" fill="currentColor"><circle cx="4" cy="4" r="3.6"/><path d="M3.3 5h1.4v8H3.3z"/></svg>
<div class="r" style="left:1019.60px;top:613.68px;width:37.80px;height:17.50px;background:#f9d38b;border-radius:2px;"></div>
<svg class="r" style="left:1057.00px;top:616.13px;width:8.00px;height:13.00px;color:#0b57a5" viewBox="0 0 8 13" fill="currentColor"><circle cx="4" cy="4" r="3.6"/><path d="M3.3 5h1.4v8H3.3z"/></svg>
<div class="r" style="left:897.80px;top:640.30px;width:11.40px;height:17.50px;background:#a2d3a3;border-radius:2px;"></div>
<svg class="r" style="left:908.80px;top:642.75px;width:8.00px;height:13.00px;color:#0b57a5" viewBox="0 0 8 13" fill="currentColor"><circle cx="4" cy="4" r="3.6"/><path d="M3.3 5h1.4v8H3.3z"/></svg>
<div class="r" style="left:780.30px;top:666.92px;width:2.20px;height:17.50px;background:#f9d38b;border-radius:2px;"></div>
<svg class="r" style="left:782.00px;top:669.37px;width:8.00px;height:13.00px;color:#0b57a5" viewBox="0 0 8 13" fill="currentColor"><circle cx="4" cy="4" r="3.6"/><path d="M3.3 5h1.4v8H3.3z"/></svg>
<div class="r" style="left:1052.80px;top:666.92px;width:2.20px;height:17.50px;background:#f9d38b;border-radius:2px;"></div>
<svg class="r" style="left:1054.80px;top:669.37px;width:8.00px;height:13.00px;color:#0b57a5" viewBox="0 0 8 13" fill="currentColor"><circle cx="4" cy="4" r="3.6"/><path d="M3.3 5h1.4v8H3.3z"/></svg>
<div class="r" style="left:1255.00px;top:666.92px;width:2.20px;height:17.50px;background:#f9d38b;border-radius:2px;"></div>
<svg class="r" style="left:1256.50px;top:669.37px;width:8.00px;height:13.00px;color:#0b57a5" viewBox="0 0 8 13" fill="currentColor"><circle cx="4" cy="4" r="3.6"/><path d="M3.3 5h1.4v8H3.3z"/></svg>
<div class="r" style="left:615.50px;top:693.54px;width:482.50px;height:17.50px;background:#f9d38b;border-radius:2px;"></div>
<svg class="r" style="left:1017.40px;top:695.99px;width:8.00px;height:13.00px;color:#0b57a5" viewBox="0 0 8 13" fill="currentColor"><circle cx="4" cy="4" r="3.6"/><path d="M3.3 5h1.4v8H3.3z"/></svg>
<svg class="r" style="left:1097.90px;top:695.99px;width:8.00px;height:13.00px;color:#0b57a5" viewBox="0 0 8 13" fill="currentColor"><circle cx="4" cy="4" r="3.6"/><path d="M3.3 5h1.4v8H3.3z"/></svg>
<div class="r" style="left:777.00px;top:720.16px;width:321.00px;height:17.50px;background:#f9d38b;border-radius:2px;"></div>
<svg class="r" style="left:1097.90px;top:722.61px;width:8.00px;height:13.00px;color:#0b57a5" viewBox="0 0 8 13" fill="currentColor"><circle cx="4" cy="4" r="3.6"/><path d="M3.3 5h1.4v8H3.3z"/></svg>
<div class="r" style="left:1261.20px;top:540.00px;width:18.80px;height:230.00px;background:#fff;"></div>
<div class="r" style="left:18.70px;top:797.50px;width:1242.40px;height:32.50px;border:1px solid #dcdcdc;border-radius:4px;box-sizing:border-box;"></div>
</body></html>
